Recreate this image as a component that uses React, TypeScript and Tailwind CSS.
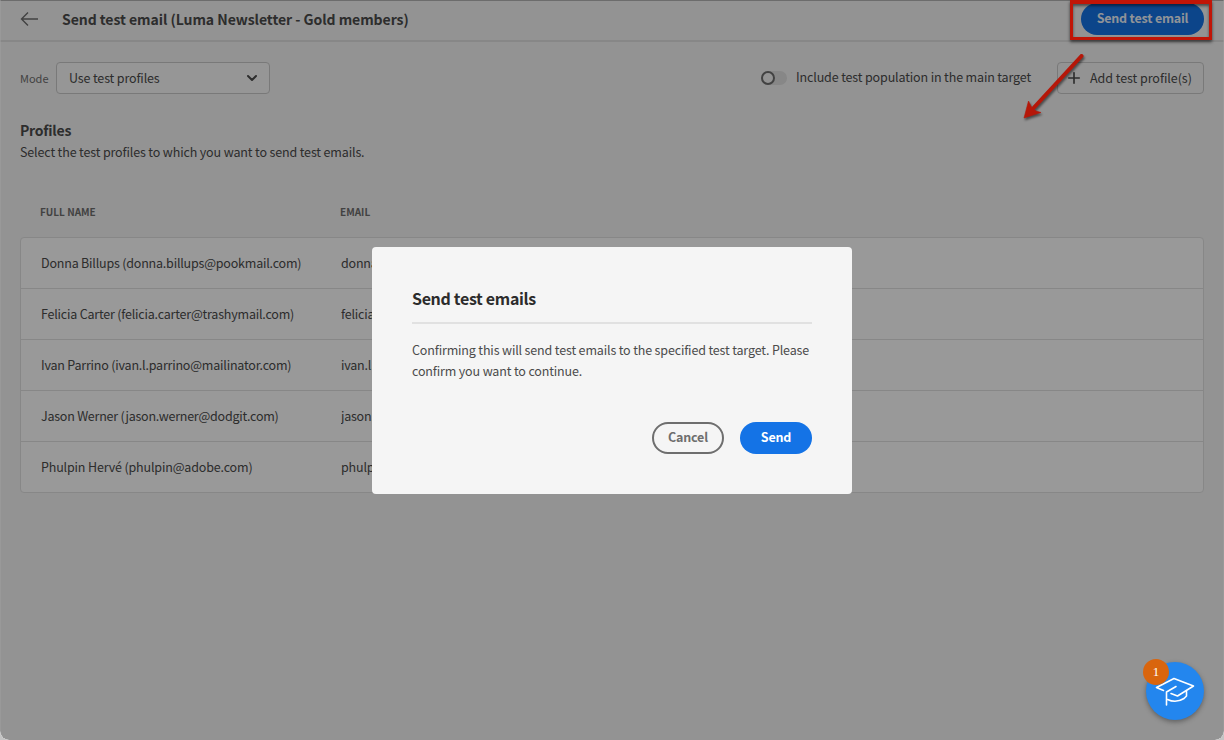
import { ChevronDown, Plus } from "lucide-react";

const profiles = [
  { name: "Donna Billups (donna.billups@pookmail.com)", email: "donna.billups@pookmail.com", tracking: "tracking-[-0.2px]" },
  { name: "Felicia Carter (felicia.carter@trashymail.com)", email: "felicia.carter@trashymail.com", tracking: "tracking-[-0.2px]" },
  { name: "Ivan Parrino (ivan.l.parrino@mailinator.com)", email: "ivan.l.parrino@mailinator.com", tracking: "tracking-[-0.2px]" },
  { name: "Jason Werner (jason.werner@dodgit.com)", email: "jason.werner@dodgit.com", tracking: "tracking-[-0.24px]" },
  { name: "Phulpin Hervé (phulpin@adobe.com)", email: "phulpin@adobe.com", tracking: "tracking-[-0.16px]" },
];

function Header() {
  return (
    <header className="flex h-[42px] shrink-0 items-center border-t border-b-2 border-t-[#b4b4b4] border-b-[#e1e1e1] px-5 pb-1">
      <svg className="h-5 w-5" viewBox="0 0 20 20" fill="none" stroke="#6e6e6e" strokeWidth="1.4">
        <path d="M8 3.5 1.5 10 8 16.5M1.5 10H18" />
      </svg>
      <h1 className="ml-[22px] text-[14px] leading-5 font-bold tracking-[-0.05px] whitespace-nowrap">
        Send test email (Luma Newsletter - Gold members)
      </h1>
      <button className="ml-auto h-8 w-[123px] rounded-full bg-[#1473e6] pb-0.5 font-bold tracking-[-0.2px] text-white/95">
        Send test email
      </button>
    </header>
  );
}

function Toolbar() {
  return (
    <section className="mt-5 flex h-8 shrink-0 items-center px-5">
      <span className="w-9 pb-px text-[11px] leading-4 text-[#6e6e6e]">Mode</span>
      <div className="flex h-8 w-[214px] items-center justify-between rounded border border-[#cacaca] bg-[#fafafa] pr-[9px] pl-3">
        <span className="tracking-[-0.14px]">Use test profiles</span>
        <ChevronDown size={16} strokeWidth={3} />
      </div>
      <div className="ml-auto flex items-center">
        <div className="h-[14px] w-[26px] rounded-full bg-[#e1e1e1]">
          <div className="h-[14px] w-[14px] rounded-full border-2 border-[#6e6e6e] bg-[#f5f5f5]" />
        </div>
        <span className="ml-[9px] w-[261px] pb-0.5 tracking-[-0.14px] whitespace-nowrap">
          Include test population in the main target
        </span>
        <button className="flex h-8 w-[147px] items-center rounded border border-[#cacaca] pl-[7px]">
          <Plus size={18} strokeWidth={2.2} />
          <span className="ml-[7px] tracking-[-0.05px] whitespace-nowrap">Add test profile(s)</span>
        </button>
      </div>
    </section>
  );
}

function ProfileTable() {
  return (
    <section className="flex flex-col px-5 pt-[26px]">
      <h2 className="text-[14px] leading-5 font-bold tracking-[-0.22px]">Profiles</h2>
      <p className="mt-0.5 leading-5 tracking-[-0.14px]">
        Select the test profiles to which you want to send test emails.
      </p>
      <div className="mt-10 flex h-[35px] pl-5 text-[10px] leading-5 font-bold text-[#6e6e6e]">
        <span className="w-[300px]">FULL NAME</span>
        <span>EMAIL</span>
      </div>
      <div className="rounded border border-[#e1e1e1] bg-white">
        {profiles.map((p) => (
          <div
            key={p.name}
            className={`flex h-[51px] items-center border-b border-[#e1e1e1] pl-5 last:h-[50px] last:border-b-0 ${p.tracking}`}
          >
            <span className="w-[300px] whitespace-nowrap">{p.name}</span>
            <span className="w-8 overflow-hidden whitespace-nowrap">{p.email}</span>
          </div>
        ))}
      </div>
    </section>
  );
}

function ConfirmDialog() {
  return (
    <div className="absolute inset-0 flex items-start justify-center pt-[247px]">
      <div className="flex h-[247px] w-[480px] flex-col rounded bg-[#f5f5f5] px-10 pt-[41px]">
        <h3 className="text-[16px] leading-5 font-bold tracking-[-0.33px] text-[#2c2c2c]">Send test emails</h3>
        <p className="mt-[14px] border-t-2 border-[#e1e1e1] pt-[15px] leading-[21px] tracking-[-0.15px] whitespace-nowrap">
          Confirming this will send test emails to the specified test target. Please
          <br />
          confirm you want to continue.
        </p>
        <div className="mt-[41px] flex justify-end gap-4 font-bold">
          <button className="h-8 w-[72px] rounded-full border-2 border-[#6e6e6e] pb-0.5 tracking-[-0.2px] text-[#6e6e6e]">
            Cancel
          </button>
          <button className="h-8 w-[72px] rounded-full bg-[#1473e6] pb-0.5 tracking-[-0.2px] text-white">Send</button>
        </div>
      </div>
    </div>
  );
}

function Annotations() {
  return (
    <>
      <div className="absolute top-0 left-[1070px] h-10 w-[142px] border-[3px] border-t-4 border-[#c11507] shadow-[0_2px_3px_rgba(0,0,0,0.6),inset_0_2px_3px_rgba(0,0,0,0.5)]" />
      <svg
        className="absolute top-[45px] left-[1010px] h-20 w-20 drop-shadow-[1px_2px_1px_rgba(0,0,0,0.5)]"
        viewBox="0 0 80 80"
      >
        <path d="M71.5 11 24 62.5" stroke="#b51709" strokeWidth="4" strokeLinecap="round" />
        <path d="M14 73 18.5 56 21.5 62 26 66 31 67.5Z" fill="#b51709" stroke="#b51709" strokeWidth="0.6" />
      </svg>
    </>
  );
}

function HelpButton() {
  return (
    <div className="absolute top-[662px] left-[1146px] h-[58px] w-[58px] rounded-full bg-[#2386ee] shadow-[0_2px_5px_rgba(0,0,0,0.35)]">
      <svg
        className="h-[58px] w-[58px]"
        viewBox="0 0 58 58"
        fill="none"
        stroke="white"
        strokeWidth="1.6"
        strokeLinejoin="round"
        strokeLinecap="round"
      >
        <path d="M17.5 28.5 10.5 25.5 28 16.5 47.5 24 31.5 34 25 31.5" />
        <path d="M30 24.5 20.5 30V43" />
        <path d="M21.5 37.5Q30 41.5 38 36.5L40.5 34V29.5" />
      </svg>
      <div className="absolute -top-[3px] -left-[3px] flex h-[26px] w-[26px] items-center justify-center rounded-full bg-[#d9650e] pb-0.5 font-['Liberation_Serif',serif] text-[13px] leading-none text-white">
        1
      </div>
    </div>
  );
}

export default function App() {
  return (
    <div className="relative h-[740px] w-[1224px] overflow-hidden bg-[#c4c4c4] font-['Noto_Sans_CJK_SC',sans-serif] text-[12.5px] leading-5 text-[#4b4b4b]">
      <div className="relative flex h-full flex-col overflow-hidden rounded-b-[9px] bg-[#f5f5f5]">
        <Header />
        <Toolbar />
        <ProfileTable />
        <div className="absolute inset-0 rounded-b-[9px] border-x border-[#a0a0a0]/50 bg-black/40" />
      </div>
      <Annotations />
      <ConfirmDialog />
      <HelpButton />
    </div>
  );
}
